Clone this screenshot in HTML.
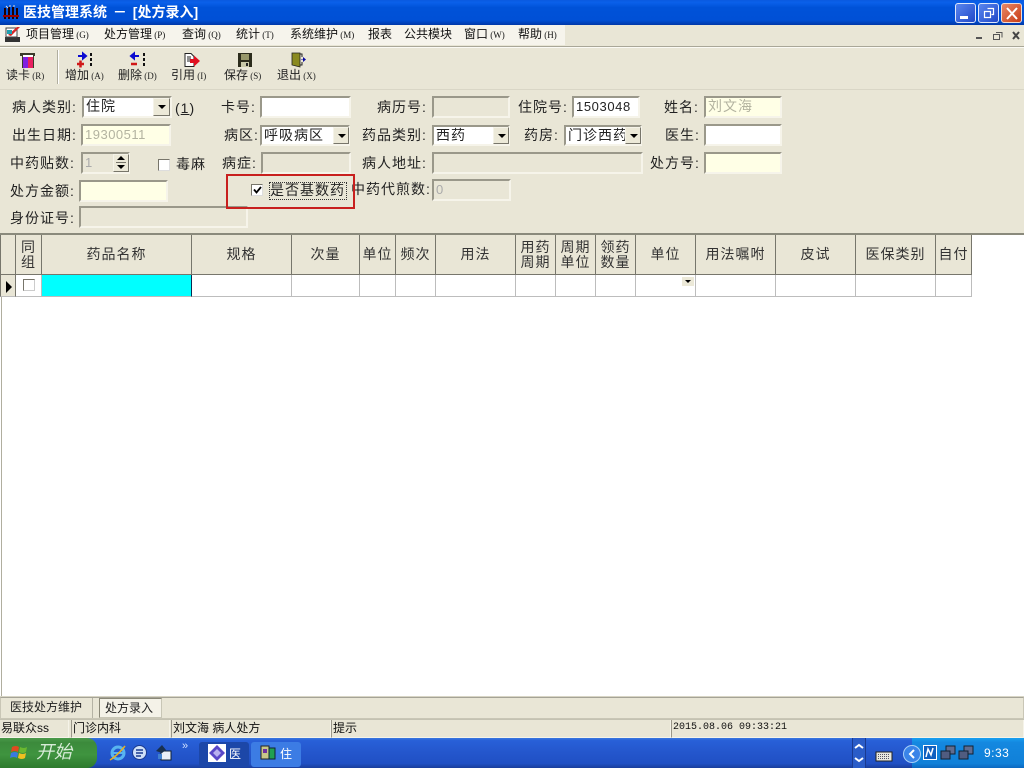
<!DOCTYPE html>
<html lang="zh"><head><meta charset="utf-8"><title>医技管理系统</title>
<style>
*{box-sizing:border-box}
html,body{margin:0;padding:0;width:1024px;height:768px;overflow:hidden;background:#fff}
body{position:relative;font-family:"Liberation Sans","WenQuanYi Zen Hei","Noto Sans CJK SC",sans-serif;color:#111}
.a,.l,.m,.t,.i,.h,.c,.b,.s{position:absolute}
.l{font-size:14px;line-height:16px;white-space:nowrap;color:#222;letter-spacing:1px}
.m{font-size:12px;line-height:14px;top:27px;white-space:nowrap;color:#111}
.m small,.t small{font-size:9px;font-family:"Liberation Serif",serif}
.t{font-size:12px;line-height:14px;top:68px;white-space:nowrap;color:#222}
.i{background:#fff;border:2px solid;border-color:#9a988a #f6f4ea #f6f4ea #9a988a;font-size:14px;line-height:17px;padding-left:2px;white-space:nowrap;overflow:hidden;letter-spacing:1px;color:#222}
.y{background:#ffffe6;color:#b3b3a0}.d{background:#e9e6d6;color:#aaa}
.b{background:#ece9d8;border:1px solid;border-color:#f5f3e8 #77756a #77756a #f5f3e8;width:17px;height:18px}
.b:after{content:"";position:absolute;left:4px;top:6px;border:4px solid transparent;border-top:4px solid #000;border-bottom:0}
.h{background:#e9e6d6;border-right:1px solid #77766c;border-bottom:1px solid #77766c;top:235px;height:40px;font-size:14px;color:#333;display:flex;align-items:center;justify-content:center;text-align:center;line-height:15px;letter-spacing:1px}
.c{background:#fff;border-right:1px solid #bdbdbd;border-bottom:1px solid #bdbdbd;top:275px;height:22px}
.s{top:720px;height:18px;background:#e9e6d6;border:1px solid;border-color:#9a978a #f5f3e8 #f5f3e8 #9a978a;font-size:12px;line-height:16px;white-space:nowrap;padding-left:1px}
svg{position:absolute;overflow:visible}
</style></head><body>

<!-- title bar -->
<div class="a" style="left:0;top:0;width:1024px;height:25px;background:linear-gradient(#0a5ae0 0,#0a60ea 10%,#0052d8 30%,#0050d6 80%,#0038a8 100%)"></div>
<svg style="left:3px;top:5px" width="16" height="15"><path d="M1 14V3h2v11zM5 14V2h2v12zM9 14V2h2v12zM13 14V3h2v11z" fill="#200"/><path d="M0 10h16v2H0z" fill="#900"/><path d="M3 1l2 2M7 0v2M11 0v2" stroke="#ddd"/></svg>
<div class="a" style="left:23px;top:4px;color:#fff;font-size:14px;line-height:16px;font-weight:bold;white-space:nowrap;word-spacing:2px">医技管理系统 － [处方录入]</div>
<div class="a" style="left:955px;top:3px;width:21px;height:20px;border:1px solid #dfe8fb;border-radius:3px;background:linear-gradient(135deg,#5a86ee,#2048c8)"><div class="a" style="left:4px;top:12px;width:8px;height:3px;background:#fff"></div></div>
<div class="a" style="left:978px;top:3px;width:21px;height:20px;border:1px solid #dfe8fb;border-radius:3px;background:linear-gradient(135deg,#5a86ee,#2048c8)">
<svg style="left:4px;top:3px" width="12" height="12"><path d="M4.500 1.500h6v6h-2M1.500 4.500h6v6h-6z" fill="none" stroke="#fff" stroke-width="1.200"/></svg></div>
<div class="a" style="left:1001px;top:3px;width:21px;height:20px;border:1px solid #f0dcd4;border-radius:3px;background:linear-gradient(135deg,#e88868,#c83c14)">
<svg style="left:4px;top:3px" width="12" height="12"><path d="M1 1l10 11M11 1L1 12" stroke="#fff" stroke-width="2"/></svg></div>

<!-- menu bar -->
<div class="a" style="left:0;top:25px;width:1024px;height:21px;background:#e9e6d6"></div>
<div class="a" style="left:0;top:25px;width:565px;height:20px;background:#f6f4ec"></div>
<svg style="left:4px;top:26px" width="17" height="17"><rect x="1" y="11" width="15" height="5" fill="#333"/><rect x="2" y="2" width="11" height="9" fill="#fff" stroke="#444"/><path d="M4 9l9-8 3 0-9 9z" fill="#d62828"/><path d="M3 4h5v4H3z" fill="#1fa0b0"/></svg>
<div class="m" style="left:26px">项目管理<small> (G)</small></div>
<div class="m" style="left:104px">处方管理<small> (P)</small></div>
<div class="m" style="left:182px">查询<small> (Q)</small></div>
<div class="m" style="left:236px">统计<small> (T)</small></div>
<div class="m" style="left:290px">系统维护<small> (M)</small></div>
<div class="m" style="left:368px">报表</div>
<div class="m" style="left:404px">公共模块</div>
<div class="m" style="left:464px">窗口<small> (W)</small></div>
<div class="m" style="left:518px">帮助<small> (H)</small></div>
<svg style="left:974px;top:29px" width="48" height="13"><path d="M2 8h6v2H2z" fill="#555"/><path d="M22 3.500h6v5M19.500 5.500h6v5h-6z" fill="none" stroke="#555"/><path d="M39 3l6 7M45 3l-6 7" stroke="#444" stroke-width="2"/></svg>
<div class="a" style="left:0;top:46px;width:1024px;height:1px;background:#a9a798"></div>
<div class="a" style="left:0;top:47px;width:1024px;height:1px;background:#fbfaf4"></div>

<!-- toolbar -->
<div class="a" style="left:0;top:48px;width:1024px;height:41px;background:#e9e6d6"></div>
<div class="a" style="left:57px;top:50px;width:2px;height:34px;background:#b0ae9f;border-right:1px solid #fff"></div>
<svg style="left:19px;top:52px" width="18" height="16"><path d="M1 1h15v3h-1v12H3V4H1z" fill="#3a3a2a"/><rect x="4" y="3" width="10" height="2" fill="#fff"/><rect x="4" y="5" width="5" height="11" fill="#8020e0"/><rect x="9" y="5" width="5" height="11" fill="#e82060"/></svg>
<div class="t" style="left:6px">读卡<small> (R)</small></div>
<svg style="left:77px;top:52px" width="18" height="16"><path d="M1 4h7M6 1.500l3 2.500-3 2.500z" stroke="#0a0ad0" stroke-width="2" fill="#0a0ad0"/><path d="M0 12h7M3.500 8.500v7" stroke="#d01818" stroke-width="2.500"/><path d="M14 1v3M14 6v3M14 11v3" stroke="#111" stroke-width="2"/></svg>
<div class="t" style="left:65px">增加<small> (A)</small></div>
<svg style="left:130px;top:52px" width="18" height="16"><path d="M9 4H2M4 1.500L1 4l3 2.500z" stroke="#0a0ad0" stroke-width="2" fill="#0a0ad0"/><path d="M1 12h6" stroke="#d01818" stroke-width="2.500"/><path d="M14 1v3M14 6v3M14 11v3" stroke="#111" stroke-width="2"/></svg>
<div class="t" style="left:118px">删除<small> (D)</small></div>
<svg style="left:184px;top:53px" width="17" height="15"><path d="M1 .5h6l3 3v10H1z" fill="#fff" stroke="#222"/><path d="M3 4h4M3 6h4M3 8h4" stroke="#222"/><path d="M6 6h4V2.500L16 8l-6 5.500V10H6z" fill="#e01020"/></svg>
<div class="t" style="left:171px">引用<small> (I)</small></div>
<svg style="left:238px;top:53px" width="14" height="14"><rect width="14" height="14" fill="#2c2c1c"/><rect x="3" y="1" width="8" height="6" fill="#97976a"/><rect x="3" y="9" width="8" height="5" fill="#c8c8a8"/><rect x="8" y="10" width="2" height="3" fill="#222"/></svg>
<div class="t" style="left:224px">保存<small> (S)</small></div>
<svg style="left:292px;top:53px" width="14" height="15"><path d="M0 0h8v14l-8-2z" fill="#8a8a20" stroke="#222" stroke-width=".8"/><path d="M8 1h2v3M8 12h2V9" stroke="#222" fill="none"/><path d="M9 6.500h2V4l3 2.500L11 9V7H9z" fill="#0a0aa0"/></svg>
<div class="t" style="left:277px">退出<small> (X)</small></div>

<!-- form -->
<div class="a" style="left:0;top:89px;width:1024px;height:144px;background:#e9e6d6;border-top:1px solid #d9d6c6"></div>
<div class="a" style="left:0;top:233px;width:1024px;height:2px;background:#8a8a7c"></div>

<div class="l" style="left:12px;top:99px">病人类别:</div>
<div class="i" style="left:82px;top:96px;width:90px;height:22px">住院</div><div class="b" style="left:153px;top:98px"></div>
<div class="l" style="left:175px;top:100px">(<u>1</u>)</div>
<div class="l" style="left:221px;top:99px">卡号:</div>
<div class="i" style="left:260px;top:96px;width:91px;height:22px"></div>
<div class="l" style="left:377px;top:99px">病历号:</div>
<div class="i d" style="left:432px;top:96px;width:78px;height:22px"></div>
<div class="l" style="left:518px;top:99px">住院号:</div>
<div class="i" style="left:572px;top:96px;width:68px;height:22px;color:#222;font-size:13px;letter-spacing:.6px">1503048</div>
<div class="l" style="left:664px;top:99px">姓名:</div>
<div class="i y" style="left:704px;top:96px;width:78px;height:22px">刘文海</div>

<div class="l" style="left:12px;top:127px">出生日期:</div>
<div class="i y" style="left:81px;top:124px;width:90px;height:22px;font-size:13px;letter-spacing:.5px">19300511</div>
<div class="l" style="left:224px;top:127px">病区:</div>
<div class="i" style="left:260px;top:125px;width:90px;height:21px">呼吸病区</div><div class="b" style="left:333px;top:127px;height:17px;width:16px"></div>
<div class="l" style="left:362px;top:127px">药品类别:</div>
<div class="i" style="left:432px;top:125px;width:78px;height:21px">西药</div><div class="b" style="left:493px;top:127px;height:17px;width:16px"></div>
<div class="l" style="left:524px;top:127px">药房:</div>
<div class="i" style="left:564px;top:125px;width:78px;height:21px">门诊西药</div><div class="b" style="left:625px;top:127px;height:17px;width:16px"></div>
<div class="l" style="left:665px;top:127px">医生:</div>
<div class="i" style="left:704px;top:124px;width:78px;height:22px"></div>

<div class="l" style="left:10px;top:155px">中药贴数:</div>
<div class="i d" style="left:81px;top:152px;width:49px;height:22px;font-size:13px">1</div>
<div class="a" style="left:113px;top:154px;width:16px;height:18px;background:#ece9d8;border:1px solid;border-color:#f5f3e8 #77756a #77756a #f5f3e8"></div>
<svg style="left:116px;top:156px" width="10" height="14"><path d="M5 0l4 4H1zM1 9h8l-4 4z" fill="#000"/><path d="M0 6.500h10" stroke="#77756a"/></svg>
<div class="a" style="left:158px;top:159px;width:12px;height:12px;background:#fff;border:1px solid;border-color:#77756a #ddd #ddd #77756a"></div>
<div class="l" style="left:176px;top:156px">毒麻</div>
<div class="l" style="left:222px;top:155px">病症:</div>
<div class="i d" style="left:261px;top:152px;width:90px;height:22px"></div>
<div class="l" style="left:362px;top:155px">病人地址:</div>
<div class="i d" style="left:432px;top:152px;width:211px;height:22px"></div>
<div class="l" style="left:650px;top:155px">处方号:</div>
<div class="i y" style="left:704px;top:152px;width:78px;height:22px"></div>

<div class="l" style="left:10px;top:183px">处方金额:</div>
<div class="i y" style="left:79px;top:180px;width:89px;height:22px"></div>
<div class="a" style="left:251px;top:184px;width:12px;height:12px;background:#fff;border:1px solid;border-color:#77756a #ddd #ddd #77756a"></div>
<svg style="left:253px;top:186px" width="9" height="8"><path d="M1 3.500l2.500 3L8 1" fill="none" stroke="#000" stroke-width="1.800"/></svg>
<div class="l" style="left:269px;top:182px;width:78px;height:18px;border:1px dotted #333;line-height:15px;padding-left:0">是否基数药</div>
<div class="l" style="left:351px;top:181px">中药代煎数:</div>
<div class="i d" style="left:432px;top:179px;width:79px;height:22px;font-size:13px">0</div>

<div class="l" style="left:10px;top:210px">身份证号:</div>
<div class="i d" style="left:79px;top:206px;width:169px;height:22px"></div>

<!-- red highlight -->
<div class="a" style="left:226px;top:174px;width:129px;height:35px;border:2px solid #c8201e"></div>

<!-- grid -->
<div class="h" style="left:0;width:16px;border-left:1px solid #77766c"></div>
<div class="h" style="left:16px;width:26px">同<br>组</div>
<div class="h" style="left:42px;width:150px">药品名称</div>
<div class="h" style="left:192px;width:100px">规格</div>
<div class="h" style="left:292px;width:68px">次量</div>
<div class="h" style="left:360px;width:36px">单位</div>
<div class="h" style="left:396px;width:40px">频次</div>
<div class="h" style="left:436px;width:80px">用法</div>
<div class="h" style="left:516px;width:40px">用药<br>周期</div>
<div class="h" style="left:556px;width:40px">周期<br>单位</div>
<div class="h" style="left:596px;width:40px">领药<br>数量</div>
<div class="h" style="left:636px;width:60px">单位</div>
<div class="h" style="left:696px;width:80px">用法嘱咐</div>
<div class="h" style="left:776px;width:80px">皮试</div>
<div class="h" style="left:856px;width:80px">医保类别</div>
<div class="h" style="left:936px;width:36px">自付</div>

<div class="c" style="left:0;width:16px;background:#e9e6d6;border-left:1px solid #77766c;border-right-color:#77766c"></div>
<svg style="left:6px;top:281px" width="7" height="12"><path d="M0 0l6 6-6 6z" fill="#000"/></svg>
<div class="c" style="left:16px;width:26px"></div>
<div class="a" style="left:23px;top:279px;width:12px;height:12px;background:#fff;border:1px solid;border-color:#77756a #ccc #ccc #77756a"></div>
<div class="c" style="left:42px;width:150px;background:#00ffff;border-right:1px solid #0a2a50;border-bottom-color:#bdbdbd"></div>
<div class="c" style="left:192px;width:100px"></div>
<div class="c" style="left:292px;width:68px"></div>
<div class="c" style="left:360px;width:36px"></div>
<div class="c" style="left:396px;width:40px"></div>
<div class="c" style="left:436px;width:80px"></div>
<div class="c" style="left:516px;width:40px"></div>
<div class="c" style="left:556px;width:40px"></div>
<div class="c" style="left:596px;width:40px"></div>
<div class="c" style="left:636px;width:60px"></div>
<div class="a" style="left:682px;top:277px;width:12px;height:9px;background:#ece9d8"></div>
<svg style="left:685px;top:280px" width="6" height="3"><path d="M0 0h6L3 3z" fill="#000"/></svg>
<div class="c" style="left:696px;width:80px"></div>
<div class="c" style="left:776px;width:80px"></div>
<div class="c" style="left:856px;width:80px"></div>
<div class="c" style="left:936px;width:36px"></div>
<div class="a" style="left:1px;top:297px;width:1px;height:400px;background:#b0ae9f"></div>

<!-- tabs -->
<div class="a" style="left:0;top:696px;width:1024px;height:1px;background:#d8d5c5"></div>
<div class="a" style="left:0;top:697px;width:1024px;height:22px;background:#e9e6d6;border:1px solid;border-color:#a5a396 #c9c6b6 #c9c6b6 #c9c6b6"></div>
<div class="a" style="left:10px;top:700px;font-size:12px;line-height:14px;color:#222">医技处方维护</div>
<div class="a" style="left:92px;top:698px;width:1px;height:20px;background:#b5b3a5"></div>
<div class="a" style="left:99px;top:698px;width:63px;height:20px;background:#f4f2e8;border:1px solid;border-color:#8a8878 #c8c6b6 #c8c6b6 #8a8878;font-size:12px;line-height:19px;padding-left:5px;color:#222">处方录入</div>

<!-- status bar -->
<div class="a" style="left:0;top:719px;width:1024px;height:19px;background:#e9e6d6;border-top:1px solid #c4c2b2"></div>
<div class="s" style="left:0;width:69px;border-left:0;border-top:0">易联众ss</div>
<div class="s" style="left:71px;width:99px;border-top:0">门诊内科</div>
<div class="s" style="left:171px;width:160px;border-top:0">刘文海 病人处方</div>
<div class="s" style="left:331px;width:340px;border-top:0">提示</div>
<div class="s" style="left:671px;width:353px;border-top:0;font-family:'Liberation Mono',monospace;font-size:10px">2015.08.06 09:33:21</div>

<!-- taskbar -->
<div class="a" style="left:0;top:738px;width:1024px;height:30px;background:linear-gradient(#3a78e0 0,#2860d8 8%,#2456cc 50%,#2050c4 85%,#1a3e9c 100%)"></div>
<div class="a" style="left:0;top:738px;width:97px;height:30px;border-radius:0 10px 10px 0;background:linear-gradient(#4a9a4a 0,#3c8a3c 15%,#3f943f 55%,#2d7a2d 100%)"></div>
<svg style="left:10px;top:744px" width="20" height="18"><path d="M2 3q4-2 7 0l-1 5q-3-2-7 0z" fill="#e04a20"/><path d="M10 3q4 2 7 0l-1 5q-3 2-7 0z" fill="#6ab830"/><path d="M1 9q4-2 7 0l-1 5q-3-2-7 0z" fill="#3a7ae0"/><path d="M9 9q4 2 7 0l-1 5q-3 2-7 0z" fill="#f0c020"/></svg>
<div class="a" style="left:36px;top:741px;color:#d8ecd8;font-size:18px;line-height:22px;font-style:italic;white-space:nowrap">开始</div>
<svg style="left:109px;top:744px" width="18" height="18"><circle cx="9" cy="9" r="6" fill="none" stroke="#58b4f0" stroke-width="3"/><path d="M4 9h10" stroke="#58b4f0" stroke-width="2"/><path d="M1 16Q8 12 16 2" fill="none" stroke="#e8b020" stroke-width="1.500"/></svg>
<svg style="left:132px;top:745px" width="15" height="15"><circle cx="7.500" cy="7.500" r="7" fill="#cfe0f8" stroke="#1a3a90"/><path d="M4 5h7M4 8h7M4 11h5" stroke="#1a3a90" stroke-width="1.500"/></svg>
<svg style="left:155px;top:745px" width="17" height="16"><rect x="6" y="6" width="10" height="9" fill="#e8eef8" stroke="#123"/><path d="M1 6l6-6 4 5-4 3z" fill="#183050"/><rect x="3" y="9" width="4" height="5" fill="#4080d0"/></svg>
<div class="a" style="left:182px;top:740px;color:#d0e0ff;font-size:11px;line-height:12px">»</div>
<div class="a" style="left:199px;top:742px;width:50px;height:25px;background:#1c47a8;border-radius:3px"></div>
<svg style="left:208px;top:744px" width="18" height="18"><rect width="18" height="18" fill="#fff"/><path d="M9 1l8 8-8 8-8-8z" fill="#5a48c8"/><path d="M9 5l4 4-4 4-4-4z" fill="#b8b0f0"/></svg>
<div class="a" style="left:229px;top:747px;color:#fff;font-size:12px;line-height:14px">医</div>
<div class="a" style="left:251px;top:742px;width:50px;height:25px;background:#3c7ce4;border-radius:3px"></div>
<svg style="left:260px;top:745px" width="16" height="16"><rect x="1" y="1" width="8" height="13" fill="#c8c888" stroke="#222"/><rect x="9" y="3" width="6" height="11" fill="#20a050" stroke="#123"/><rect x="3" y="4" width="4" height="4" fill="#7030a0"/></svg>
<div class="a" style="left:280px;top:747px;color:#fff;font-size:12px;line-height:14px">住</div>

<div class="a" style="left:852px;top:738px;width:14px;height:30px;background:#2a5cc8;border-left:1px solid #1a3a90;border-right:1px solid #1a3a90"></div>
<svg style="left:854px;top:743px" width="10" height="22"><path d="M1 5l4-3 4 3M1 15l4 3 4-3" fill="none" stroke="#fff" stroke-width="2"/></svg>
<svg style="left:876px;top:748px" width="16" height="14"><rect x="0" y="4" width="16" height="9" fill="#e8e8e0" stroke="#222"/><path d="M2 6.500h12M2 8.500h12M2 10.500h12" stroke="#556" stroke-dasharray="1 1"/></svg>
<div class="a" style="left:912px;top:738px;width:112px;height:30px;background:linear-gradient(#18a0f0 0,#1488e0 15%,#1080d8 85%,#0c68c0 100%)"></div>
<div class="a" style="left:903px;top:745px;width:18px;height:18px;border-radius:9px;background:#3a84e8;border:1px solid #a8d0f8"></div>
<svg style="left:908px;top:749px" width="8" height="10"><path d="M6 1L2 5l4 4" fill="none" stroke="#fff" stroke-width="2"/></svg>
<svg style="left:923px;top:745px" width="14" height="16"><rect x=".5" y=".5" width="13" height="14" fill="#1060c0" stroke="#fff"/><path d="M3 12l2-8 3 6 2-7" fill="none" stroke="#fff" stroke-width="1.500"/></svg>
<svg style="left:940px;top:745px" width="16" height="16"><rect x="6" y="1" width="9" height="8" fill="#606c90" stroke="#123"/><rect x="1" y="6" width="9" height="8" fill="#505c80" stroke="#123"/></svg>
<svg style="left:958px;top:745px" width="16" height="16"><rect x="6" y="1" width="9" height="8" fill="#606c90" stroke="#123"/><rect x="1" y="6" width="9" height="8" fill="#505c80" stroke="#123"/></svg>
<div class="a" style="left:984px;top:746px;color:#fff;font-size:12px;line-height:14px;letter-spacing:.5px">9:33</div>
</body></html>
